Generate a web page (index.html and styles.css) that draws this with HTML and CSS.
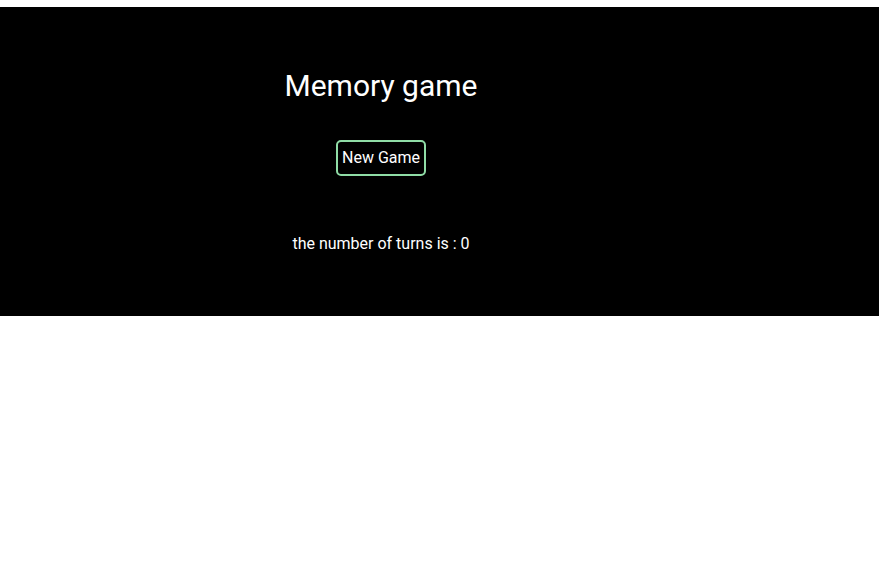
FILE: index.html
```html
<!DOCTYPE html>
<html>
<head>
<meta charset="utf-8">
<link rel="stylesheet" href="styles.css">
</head>
<body>
<div class="app">
  <div class="inner">
    <h1 class="title">Memory game</h1>
    <button class="new-game">New Game</button>
    <p class="turns">the number of turns is : 0</p>
  </div>
</div>
</body>
</html>
```
FILE: styles.css
```css
html, body {
  margin: 0;
  padding: 0;
  background: #fff;
}
body {
  font-family: Roboto, "Liberation Sans", sans-serif;
}
.app {
  margin-top: 7px;
  height: 309px;
  background: #000;
  color: #fff;
}
.inner {
  width: 762px;
  padding-top: 61px;
  display: flex;
  flex-direction: column;
  align-items: center;
}
.title {
  margin: 0;
  font-size: 30px;
  line-height: 35px;
  font-weight: 400;
}
.new-game {
  margin-top: 37px;
  background: transparent;
  color: #fff;
  border: 2px solid #8fdca6;
  border-radius: 5px;
  font-family: Roboto, "Liberation Sans", sans-serif;
  font-size: 16px;
  line-height: 20px;
  padding: 6px 4px;
}
.turns {
  margin: 58px 0 0;
  font-size: 16px;
  line-height: 19px;
}
```
